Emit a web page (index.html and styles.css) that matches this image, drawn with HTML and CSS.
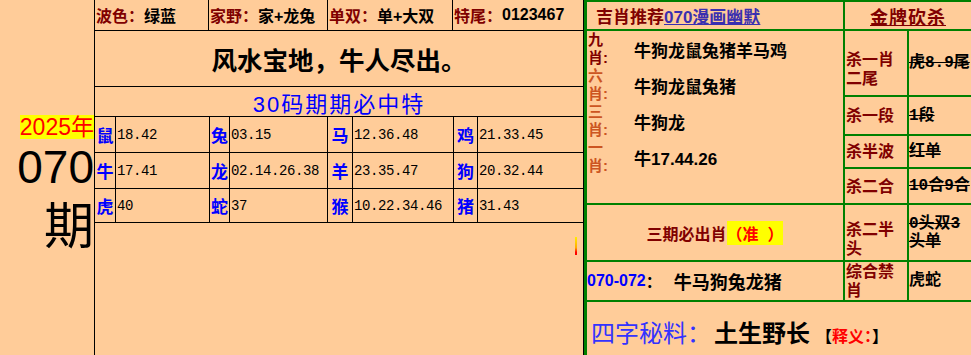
FILE: index.html
```html
<!DOCTYPE html>
<html lang="zh-CN">
<head>
<meta charset="utf-8">
<title>070期</title>
<link rel="stylesheet" href="styles.css">
</head>
<body>
<div class="page">
  <aside class="issue">
    <span class="year">2025年</span>
    <span class="num">070</span>
    <span class="qi">期</span>
  </aside>

  <main class="mid">
    <div class="attrs">
      <div class="attr"><span class="k">波色：</span>绿蓝</div>
      <div class="attr"><span class="k">家野：</span>家+龙兔</div>
      <div class="attr"><span class="k">单双：</span>单+大双</div>
      <div class="attr"><span class="k">特尾：</span>0123467</div>
    </div>
    <div class="slogan">风水宝地，牛人尽出。</div>
    <div class="title">30码期期必中特</div>
    <div class="codes">
      <span class="z">鼠</span><span class="v">18.42</span>
      <span class="z">兔</span><span class="v">03.15</span>
      <span class="z">马</span><span class="v">12.36.48</span>
      <span class="z">鸡</span><span class="v">21.33.45</span>
      <span class="z">牛</span><span class="v">17.41</span>
      <span class="z">龙</span><span class="v">02.14.26.38</span>
      <span class="z">羊</span><span class="v">23.35.47</span>
      <span class="z">狗</span><span class="v">20.32.44</span>
      <span class="z">虎</span><span class="v">40</span>
      <span class="z">蛇</span><span class="v">37</span>
      <span class="z">猴</span><span class="v">10.22.34.46</span>
      <span class="z">猪</span><span class="v">31.43</span>
    </div>
    <div class="rest"><i class="mark"></i></div>
  </main>

  <section class="tips">
    <div class="hd">吉肖推荐<span class="link">070漫画幽默</span></div>
    <div class="hd2"><span>金牌砍杀</span></div>
    <div class="picks">
      <span class="pl dark">九肖:</span><span class="pv">牛狗龙鼠兔猪羊马鸡</span>
      <span class="pl">六肖:</span><span class="pv">牛狗龙鼠兔猪</span>
      <span class="pl">三肖:</span><span class="pv">牛狗龙</span>
      <span class="pl">一肖:</span><span class="pv">牛17.44.26</span>
    </div>
    <div class="kl low">杀一肖二尾</div><div class="kv del">虎8.9尾</div>
    <div class="kl">杀一段</div><div class="kv del">1段</div>
    <div class="kl">杀半波</div><div class="kv del">红单</div>
    <div class="kl">杀二合</div><div class="kv del">10合9合</div>
    <div class="must">三期必出肖<span class="zhun">（准&nbsp;&nbsp;）</span></div>
    <div class="kl low">杀二半头</div><div class="kv del">0头双3头单</div>
    <div class="range"><span class="rn">070-072</span>：<span class="rz">牛马狗兔龙猪</span></div>
    <div class="kl">综合禁肖</div><div class="kv">虎蛇</div>
    <div class="secret"><span class="sk">四字秘料：</span><span class="sw">土生野长</span><span class="sx">【<em>释义：</em>】</span></div>
  </section>
</div>
</body>
</html>
```

FILE: styles.css
```css
* { box-sizing: border-box; margin: 0; padding: 0; }
html, body { height: 100%; }
body {
  background: #ffcc99;
  color: #000;
  font-family: "Liberation Sans", "Noto Sans CJK SC", sans-serif;
  overflow: hidden;
}
.page { display: flex; height: 355px; }

/* left issue column */
.issue {
  width: 95px;
  border-right: 1px solid #000;
  display: flex;
  flex-direction: column;
  align-items: flex-end;
  padding-top: 115px;
}
.year {
  background: #ffff00;
  color: #ff0000;
  font-size: 23px;
  line-height: 24px;
  height: 24px;
}
.num { font-size: 46px; line-height: 46px; margin-top: 5px; }
.qi {
  font-family: "Noto Sans CJK SC", sans-serif;
  font-size: 50px;
  line-height: 50px;
  margin-top: 7px;
}

/* middle column */
.mid {
  width: 489px;
  border-right: 1px solid #000;
  display: flex;
  flex-direction: column;
}
.attrs {
  display: grid;
  grid-template-columns: 114px 119px 125px 1fr;
  height: 31px;
  border-bottom: 1px solid #000;
}
.attr {
  border-right: 1px solid #000;
  font-size: 16px;
  font-weight: 700;
  display: flex;
  align-items: center;
  padding-left: 1px;
  white-space: nowrap;
}
.attr:last-child { border-right: 0; }
.attr .k { color: #800000; }

.slogan {
  height: 56px;
  border-bottom: 1px solid #000;
  display: flex;
  align-items: center;
  justify-content: center;
  font-size: 25.5px;
  font-weight: 700;
}
.title {
  height: 30px;
  border-bottom: 1px solid #000;
  display: flex;
  align-items: center;
  justify-content: center;
  font-size: 22px;
  letter-spacing: 2px;
  color: #0000ff;
}
.codes {
  display: grid;
  grid-template-columns: 21px 94px 20px 98px 25px 101px 24px 1fr;
  grid-template-rows: 36px 36px 34px;
}
.codes > span {
  border-right: 1px solid #000;
  border-bottom: 1px solid #000;
  display: flex;
  align-items: center;
  white-space: nowrap;
}
.codes > span:nth-child(8n) { border-right: 0; }
.z { color: #0000ff; font-weight: 700; font-size: 17px; justify-content: center; }
.v {
  font-family: "Liberation Mono", monospace;
  font-size: 14px;
  letter-spacing: -0.4px;
  padding-left: 1px;
}

.rest {
  flex: 1;
  display: flex;
  justify-content: flex-end;
  align-items: flex-start;
  padding: 14px 6px 0 0;
}
.mark {
  width: 2px;
  height: 18px;
  background: linear-gradient(#ffee00 0, #ffaa00 60%, #ff0000 85%);
}

/* right column */
.tips {
  width: 387px;
  display: grid;
  grid-template-columns: 256px 62px 62px;
  grid-template-rows: 27px 64px 37px 31px 34px 55px 38px 53px;
  gap: 2px;
  padding: 2px 0 0 3px;
  background: #008000;
  font-weight: 700;
}
.tips > * { background: #ffcc99; }

.hd {
  display: flex;
  align-items: center;
  padding-left: 9px;
  font-size: 17px;
  color: #800000;
  white-space: nowrap;
}
.link { color: #3a2fb0; text-decoration: underline; }
.hd2 {
  grid-column: span 2;
  display: flex;
  align-items: center;
  justify-content: center;
  font-size: 18px;
  color: #800000;
  letter-spacing: 1px;
}
.hd2 span { text-decoration: underline; }

.picks {
  grid-row: span 4;
  display: grid;
  grid-template-columns: 24px 1fr;
  grid-auto-rows: 36px;
}
.pl {
  font-size: 15px;
  line-height: 18px;
  color: #cc5522;
  padding-left: 1px;
}
.pl.dark { color: #800000; }
.pv {
  font-size: 17px;
  padding-left: 23px;
  display: flex;
  align-items: center;
  white-space: nowrap;
}

.kl {
  font-size: 16px;
  line-height: 19px;
  color: #800000;
  display: flex;
  align-items: center;
  padding-left: 1px;
}
.kl.low { padding-top: 12px; }
.kv {
  font-family: "Liberation Mono", "Noto Sans CJK SC", monospace;
  font-size: 16px;
  line-height: 18px;
  display: flex;
  align-items: center;
}
.del { text-decoration: line-through; }

.must {
  display: flex;
  align-items: center;
  justify-content: center;
  font-size: 16px;
  color: #800000;
  padding-top: 1px;
}
.zhun { background: #ffff00; color: #ff0000; }

.range {
  display: flex;
  align-items: center;
  font-size: 16px;
  white-space: nowrap;
}
.rn { color: #0000ff; }
.rz { font-size: 18px; margin-left: 12px; }

.secret {
  grid-column: 1 / -1;
  display: flex;
  align-items: baseline;
  padding: 12px 0 0 4px;
  white-space: nowrap;
}
.sk { color: #3333ff; font-size: 24px; font-weight: 400; }
.sw { font-size: 24px; margin-left: 3px; }
.sx { font-size: 16px; margin-left: 6px; }
.sx em { font-style: normal; color: #ff0000; }
```
